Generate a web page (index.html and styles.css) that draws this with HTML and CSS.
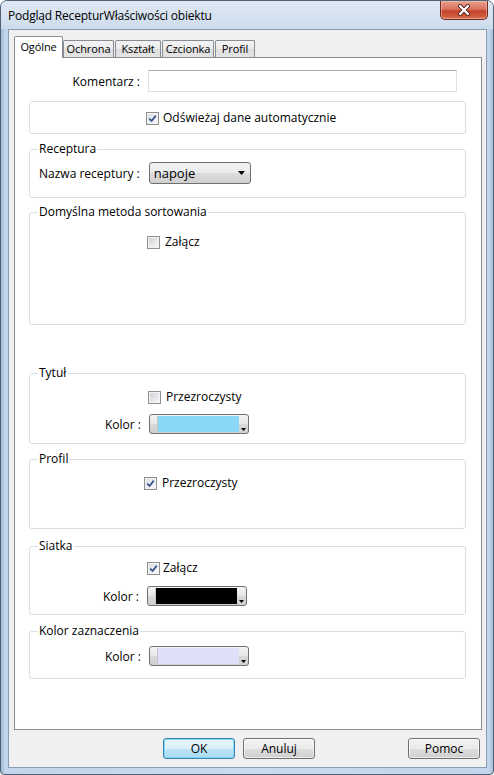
FILE: index.html
```
<!DOCTYPE html>
<html lang="pl">
<head>
<meta charset="utf-8">
<title>Podgląd RecepturWłaściwości obiektu</title>
<link rel="stylesheet" href="styles.css">
</head>
<body>
<div class="window">
  <div class="titlebar">
    <span class="title">Podgląd RecepturWłaściwości obiektu</span>
    <div class="close">
      <svg width="14" height="12" viewBox="0 0 14 12">
        <path d="M3 2 L11 10 M11 2 L3 10" stroke="#5a2a22" stroke-width="4" stroke-linecap="round"/>
        <path d="M3 2 L11 10 M11 2 L3 10" stroke="#ffffff" stroke-width="2.2" stroke-linecap="round"/>
      </svg>
    </div>
  </div>
  <div class="client">
    <div class="tabs">
      <div class="tab active t-ogolne">Ogólne</div>
      <div class="tab t-ochrona">Ochrona</div>
      <div class="tab t-ksztalt">Kształt</div>
      <div class="tab t-czcionka">Czcionka</div>
      <div class="tab t-profil">Profil</div>
    </div>
    <div class="panel">
      <div class="row komentarz">
        <span class="lbl-k">Komentarz :</span>
        <div class="input"></div>
      </div>

      <div class="group g-auto">
        <div class="check-row cr-auto">
          <span class="cb checked"><svg width="9" height="9" viewBox="0 0 9 9"><path d="M1.2 4.6 L3.6 7 L7.8 1.6" fill="none" stroke="#3a528a" stroke-width="1.8"/></svg></span>
          <span>Odświeżaj dane automatycznie</span>
        </div>
      </div>

      <fieldset class="group g-rec">
        <legend>Receptura</legend>
        <div class="row rec-row">
          <span>Nazwa receptury :</span>
          <div class="combo">
            <span>napoje</span>
            <svg width="7" height="4" viewBox="0 0 7 4"><path d="M0 0 H7 L3.5 4 Z" fill="#000"/></svg>
          </div>
        </div>
      </fieldset>

      <fieldset class="group g-sort">
        <legend>Domyślna metoda sortowania</legend>
        <div class="check-row cr-sort">
          <span class="cb"></span>
          <span>Załącz</span>
        </div>
      </fieldset>

      <fieldset class="group g-tytul">
        <legend>Tytuł</legend>
        <div class="check-row cr-tytul">
          <span class="cb"></span>
          <span>Przezroczysty</span>
        </div>
        <div class="row kolor-row kr-tytul">
          <span class="lbl-c">Kolor :</span>
          <div class="picker">
            <div class="swatch sw-blue"></div>
            <div class="pick-arrow"><svg width="5" height="3" viewBox="0 0 5 3"><path d="M0 0 H5 L2.5 3 Z" fill="#000"/></svg></div>
          </div>
        </div>
      </fieldset>

      <fieldset class="group g-profil">
        <legend>Profil</legend>
        <div class="check-row cr-profil">
          <span class="cb checked"><svg width="9" height="9" viewBox="0 0 9 9"><path d="M1.2 4.6 L3.6 7 L7.8 1.6" fill="none" stroke="#3a528a" stroke-width="1.8"/></svg></span>
          <span>Przezroczysty</span>
        </div>
      </fieldset>

      <fieldset class="group g-siatka">
        <legend>Siatka</legend>
        <div class="check-row cr-siatka">
          <span class="cb checked"><svg width="9" height="9" viewBox="0 0 9 9"><path d="M1.2 4.6 L3.6 7 L7.8 1.6" fill="none" stroke="#3a528a" stroke-width="1.8"/></svg></span>
          <span>Załącz</span>
        </div>
        <div class="row kolor-row kr-siatka">
          <span class="lbl-c">Kolor :</span>
          <div class="picker">
            <div class="swatch sw-black"></div>
            <div class="pick-arrow"><svg width="5" height="3" viewBox="0 0 5 3"><path d="M0 0 H5 L2.5 3 Z" fill="#000"/></svg></div>
          </div>
        </div>
      </fieldset>

      <fieldset class="group g-zazn">
        <legend>Kolor zaznaczenia</legend>
        <div class="row kolor-row kr-zazn">
          <span class="lbl-c">Kolor :</span>
          <div class="picker">
            <div class="swatch sw-lav"></div>
            <div class="pick-arrow"><svg width="5" height="3" viewBox="0 0 5 3"><path d="M0 0 H5 L2.5 3 Z" fill="#000"/></svg></div>
          </div>
        </div>
      </fieldset>
    </div>
    <div class="buttons">
      <div class="btn btn-ok">OK</div>
      <div class="btn">Anuluj</div>
      <div class="btn btn-help">Pomoc</div>
    </div>
  </div>
</div>
</body>
</html>
```
FILE: styles.css
```
* { box-sizing: border-box; }
html, body { margin: 0; padding: 0; background: #ffffff; }
body {
  font-family: "Open Sans", "Noto Sans", sans-serif;
  font-size: 12px;
  color: #000;
}
.window {
  width: 494px;
  height: 775px;
  border: 1px solid #4f6177;
  border-radius: 7px 7px 4px 4px;
  background: linear-gradient(90deg, #9fb9d6 0px, #c3d5ea 4px, #cbdbed 50%, #c3d5ea calc(100% - 4px), #a7c0dc 100%);
  overflow: hidden;
}
.titlebar {
  height: 28px;
  display: flex;
  align-items: flex-start;
  justify-content: space-between;
  padding-left: 7px;
  padding-right: 5px;
  background: linear-gradient(180deg, #dfe8f3 0%, #d5e1ef 60%, #cbdbed 100%);
}
.title {
  margin-top: 6px;
  line-height: 17px;
  font-size: 12px;
  letter-spacing: -0.2px;
}
.close {
  width: 48px;
  height: 19px;
  border: 1px solid #6b2c24;
  border-top: none;
  border-radius: 0 0 5px 5px;
  background: linear-gradient(180deg, #e6a190 0%, #d9735f 45%, #c8432c 55%, #cf5a3d 85%, #e07c5a 100%);
  box-shadow: inset 0 0 0 1px rgba(255,210,200,0.45);
  display: flex;
  align-items: center;
  justify-content: center;
}
.client {
  width: 479px;
  height: 739px;
  margin-left: 7px;
  border: 1px solid #8a9cb2;
  background: #f0f0f0;
  display: flex;
  flex-direction: column;
}
.tabs {
  display: flex;
  align-items: flex-end;
  height: 21px;
  margin-top: 6px;
  padding-left: 5px;
}
.tab {
  height: 17px;
  line-height: 15px;
  font-size: 11px;
  letter-spacing: -0.1px;
  text-align: center;
  border: 1px solid #898c95;
  border-bottom: none;
  border-radius: 2px 2px 0 0;
  background: linear-gradient(180deg, #f3f3f3 0%, #ebebeb 50%, #dedede 51%, #e4e4e4 100%);
  margin-right: 1px;
}
.tab.active {
  height: 22px;
  margin-bottom: -1px;
  line-height: 19px;
  background: #ffffff;
  position: relative;
  z-index: 1;
  margin-right: 0;
}
.t-ogolne { width: 49px; }
.t-ochrona { width: 51px; }
.t-ksztalt { width: 46px; }
.t-czcionka { width: 52px; }
.t-profil { width: 40px; }
.panel {
  margin-left: 5px;
  width: 468px;
  height: 673px;
  border: 1px solid #898c95;
  background: #ffffff;
  display: flex;
  flex-direction: column;
  align-items: flex-start;
}
.row { display: flex; align-items: center; }
.komentarz { margin-top: 12px; }
.lbl-k { width: 125px; text-align: right; }
.input {
  width: 309px;
  height: 22px;
  margin-left: 8px;
  border: 1px solid #dbdfe6;
  border-top-color: #abadb3;
  background: #fff;
}
.group {
  margin: 0 0 0 14px;
  padding: 0;
  width: 437px;
  border: 1px solid #d5dfe5;
  border-radius: 3px;
  min-inline-size: 0;
}
legend {
  margin-left: 8px;
  padding: 0 1px;
  line-height: 16px;
  font-size: 12px;
}
.g-auto { margin-top: 9px; height: 33px; padding-top: 8px; }
.g-rec { margin-top: 7px; height: 57px; }
.g-sort { margin-top: 6px; height: 121px; }
.g-tytul { margin-top: 40px; height: 79px; }
.g-profil { margin-top: 7px; height: 78px; }
.g-siatka { margin-top: 9px; height: 77px; }
.g-zazn { margin-top: 8px; height: 56px; }

.check-row {
  display: flex;
  align-items: center;
  height: 16px;
  line-height: 16px;
}
.cb {
  width: 13px;
  height: 13px;
  margin-right: 4px;
  border: 1px solid #8f8f8f;
  background: linear-gradient(135deg, #cbcfd5 0%, #e3e5e8 50%, #f7f7f7 100%);
  box-shadow: inset 0 0 0 1px #f4f4f4;
  display: flex;
  align-items: center;
  justify-content: center;
  flex: none;
}
.cb.checked {
  background: linear-gradient(135deg, #d6dbe3 0%, #eef0f4 60%, #fafafa 100%);
}
.cb svg { display: block; }
.cr-auto { padding-left: 116px; }
.cr-sort { margin-top: 14px; padding-left: 117px; }
.cr-sort .cb { margin-right: 5px; }
.cr-tytul { margin-top: 8px; padding-left: 118px; }
.cr-tytul .cb { margin-right: 5px; }
.cr-profil { margin-top: 8px; padding-left: 114px; }
.cr-profil .cb { margin-right: 5px; }
.cr-siatka { margin-top: 6px; padding-left: 117px; }
.cr-siatka .cb { margin-right: 3px; }

.rec-row { margin-top: 5px; padding-left: 9px; }
.combo {
  margin-left: 9px;
  width: 102px;
  height: 22px;
  border: 1px solid #707070;
  border-radius: 3px;
  background: linear-gradient(180deg, #f2f2f2 0%, #ebebeb 50%, #dddddd 51%, #cfcfcf 100%);
  display: flex;
  align-items: center;
  justify-content: space-between;
  padding: 0 4px 0 4px;
  font-size: 13px;
}
.combo svg { display: block; margin-right: 1px; }

.kolor-row { height: 20px; }
.kr-tytul { margin-top: 9px; }
.kr-siatka { margin-top: 10px; }
.kr-zazn { margin-top: 7px; }
.lbl-c { width: 111px; text-align: right; }
.kr-siatka .lbl-c { width: 109px; }
.picker {
  margin-left: 8px;
  width: 100px;
  height: 20px;
  border: 1px solid #707070;
  border-radius: 3px;
  background: linear-gradient(180deg, #f4f4f4 0%, #e6e6e6 50%, #d9d9d9 51%, #cfcfcf 100%);
  display: flex;
  padding: 1px 0 1px 7px;
}
.swatch {
  flex: 1;
  border-left: 1px solid #c8c8c8;
}
.sw-blue { background: #88d8f6; }
.sw-black { background: #000000; }
.sw-lav { background: #dde0f8; }
.pick-arrow {
  width: 9px;
  display: flex;
  align-items: flex-end;
  justify-content: center;
  padding-bottom: 1px;
}
.pick-arrow svg { display: block; }

.buttons {
  display: flex;
  margin-top: 8px;
  padding-left: 154px;
  padding-right: 6px;
}
.btn {
  width: 72px;
  height: 21px;
  border: 1px solid #707070;
  border-radius: 3px;
  background: linear-gradient(180deg, #f2f2f2 0%, #ebebeb 50%, #dddddd 51%, #cfcfcf 100%);
  box-shadow: inset 0 0 0 1px rgba(255,255,255,0.6);
  text-align: center;
  line-height: 19px;
  font-size: 12px;
  margin-right: 8px;
}
.btn-ok {
  border-color: #3c7fb1;
  background: linear-gradient(180deg, #e8f5fc 0%, #dbeffa 50%, #bee5f7 51%, #a9dbf3 100%);
  box-shadow: inset 0 0 0 1px #7fdcf8;
}
.btn-help { margin-left: auto; margin-right: 0; }
```
